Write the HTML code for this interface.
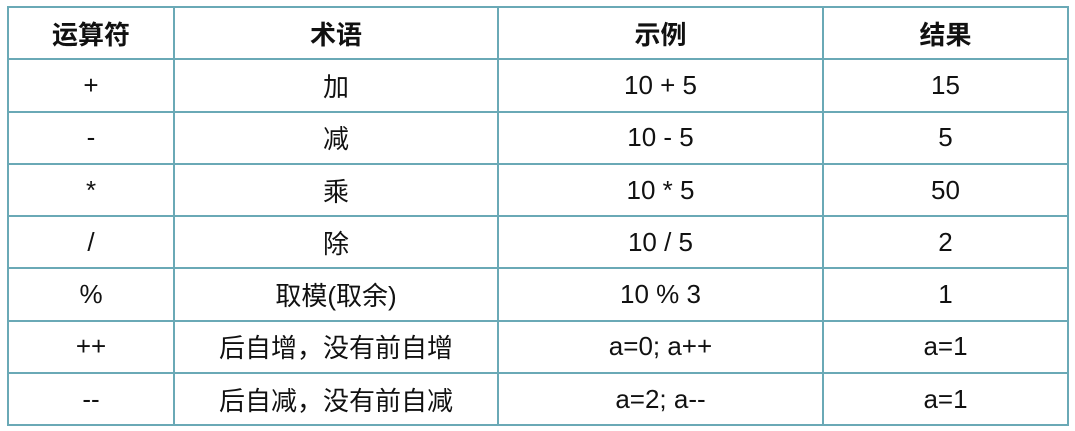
<html><head><style>
body{margin:0;background:#fff;width:1075px;height:431px;overflow:hidden;font-family:"Liberation Sans","Noto Sans CJK SC",sans-serif;}
table{position:absolute;left:7px;top:6px;border-collapse:collapse;table-layout:fixed;width:1060px;height:419px;}
tr{height:52.3px;}
td{border:2px solid #6aa9b6;text-align:center;font-size:26px;color:#111;padding:0;}
tr:first-child td{font-weight:bold;}
</style></head><body>
<table>
<colgroup><col style="width:166px"><col style="width:324px"><col style="width:325px"><col style="width:245px"></colgroup>
<tr><td>运算符</td><td>术语</td><td>示例</td><td>结果</td></tr>
<tr><td>+</td><td>加</td><td>10 + 5</td><td>15</td></tr>
<tr><td>-</td><td>减</td><td>10 - 5</td><td>5</td></tr>
<tr><td>*</td><td>乘</td><td>10 * 5</td><td>50</td></tr>
<tr><td>/</td><td>除</td><td>10 / 5</td><td>2</td></tr>
<tr><td>%</td><td>取模(取余)</td><td>10 % 3</td><td>1</td></tr>
<tr><td>++</td><td>后自增，没有前自增</td><td>a=0; a++</td><td>a=1</td></tr>
<tr><td>--</td><td>后自减，没有前自减</td><td>a=2; a--</td><td>a=1</td></tr>
</table>
</body></html>
